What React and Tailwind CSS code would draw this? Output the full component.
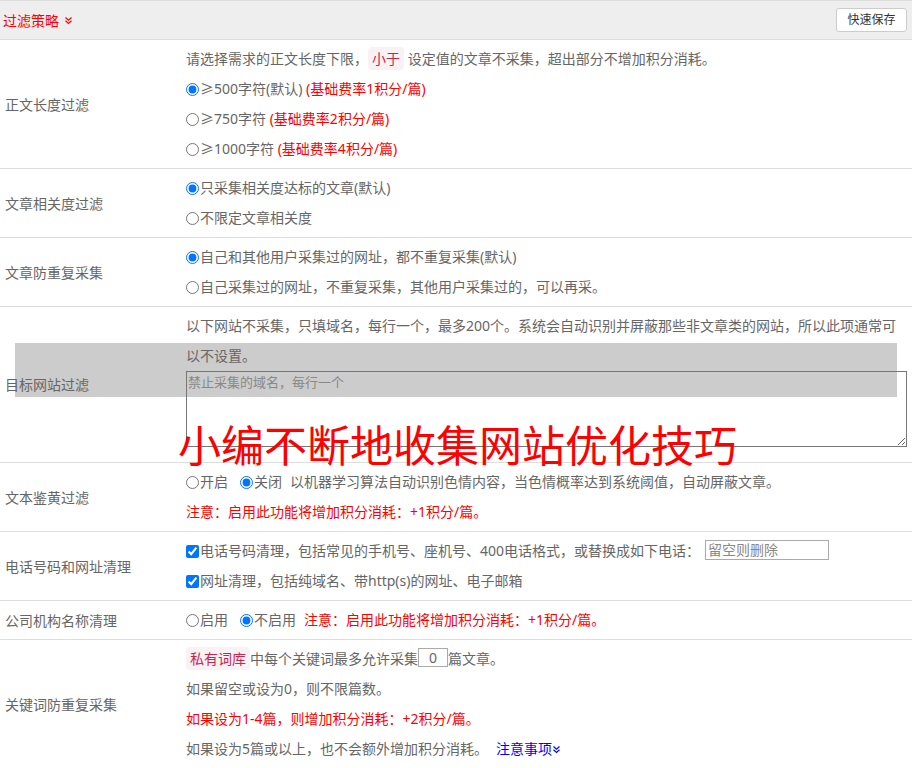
import React from "react";

const Chev = ({ color }) => (
  <svg width="9" height="9" viewBox="0 0 9 9" className="inline-block" fill="none" stroke={color} strokeWidth="1.2">
    <polyline points="1.5,1.5 4.5,4.2 7.5,1.5" />
    <polyline points="1.5,4.8 4.5,7.5 7.5,4.8" />
  </svg>
);

const Tag = ({ children }) => (
  <span className="bg-[#f9f2f4] text-[#c7254e] rounded-[4px] px-[4px] py-[2px] text-[14px]">{children}</span>
);

const Radio = ({ checked, name }) => (
  <input type="radio" name={name} defaultChecked={checked} className="m-0 mr-[1px] align-[-2px] w-[13px] h-[13px]" />
);

const Check = () => (
  <input type="checkbox" defaultChecked className="m-0 mr-[1px] align-[-2px] w-[13px] h-[13px]" />
);

const Row = ({ label, children, bodyClass = "" }) => (
  <div className="grid grid-cols-[186px_1fr] border-b border-[#ddd]">
    <div className="flex items-center pl-[5px]">{label}</div>
    <div className={"py-[4px] pr-[5px] leading-[30px] " + bodyClass}>{children}</div>
  </div>
);

export default function App() {
  return (
    <div
      className="relative w-[912px] h-[768px] overflow-hidden bg-white text-[14px] text-[#666]"
      style={{ fontFamily: '"Noto Sans", "Noto Sans CJK SC", sans-serif' }}
    >
      <div className="absolute left-[15px] top-[343px] w-[882px] h-[54px] bg-[#ccc]" />
      <div className="relative">
        <div className="h-[40px] bg-[#eee] border-t border-b border-[#ddd] flex items-center justify-between pl-[3px] pr-[5px]">
          <div className="text-[#f00] flex items-center gap-[5px]">
            <span>过滤策略</span>
            <Chev color="#f00" />
          </div>
          <button className="h-[24px] w-[71px] bg-white border border-[#ccc] rounded-[3px] text-[12px] text-[#333]">
            快速保存
          </button>
        </div>

        <Row label="正文长度过滤">
          <div>
            请选择需求的正文长度下限，<Tag>小于</Tag> 设定值的文章不采集，超出部分不增加积分消耗。
          </div>
          <div>
            <Radio name="len" checked />≥500字符(默认) <span className="text-[#f00]">(基础费率1积分/篇)</span>
          </div>
          <div>
            <Radio name="len" />≥750字符 <span className="text-[#f00]">(基础费率2积分/篇)</span>
          </div>
          <div>
            <Radio name="len" />≥1000字符 <span className="text-[#f00]">(基础费率4积分/篇)</span>
          </div>
        </Row>

        <Row label="文章相关度过滤">
          <div>
            <Radio name="rel" checked />只采集相关度达标的文章(默认)
          </div>
          <div>
            <Radio name="rel" />不限定文章相关度
          </div>
        </Row>

        <Row label="文章防重复采集">
          <div>
            <Radio name="dup" checked />自己和其他用户采集过的网址，都不重复采集(默认)
          </div>
          <div>
            <Radio name="dup" />自己采集过的网址，不重复采集，其他用户采集过的，可以再采。
          </div>
        </Row>

        <Row label="目标网站过滤">
          <div>
            以下网站不采集，只填域名，每行一个，最多200个。系统会自动识别并屏蔽那些非文章类的网站，所以此项通常可
            <br />
            以不设置。
          </div>
          <textarea
            placeholder="禁止采集的域名，每行一个"
            className="block w-[721px] h-[76px] mb-[11px] bg-transparent border border-[#777] text-[13px] leading-[18px] px-[1px] py-[1px] placeholder:text-[#888]"
          />
        </Row>

        <Row label="文本鉴黄过滤">
          <div>
            <Radio name="porn" />开启
            <span className="inline-block w-[12px]" />
            <Radio name="porn" checked />关闭
            <span className="inline-block w-[8px]" />
            以机器学习算法自动识别色情内容，当色情概率达到系统阈值，自动屏蔽文章。
          </div>
          <div className="text-[#f00]">注意：启用此功能将增加积分消耗：+1积分/篇。</div>
        </Row>

        <Row label="电话号码和网址清理">
          <div>
            <Check />电话号码清理，包括常见的手机号、座机号、400电话格式，或替换成如下电话：
            <input
              placeholder="留空则删除"
              className="ml-[5px] w-[124px] h-[20px] border border-[#aaa] px-[2px] text-[14px] leading-[18px] align-[1px] placeholder:text-[#888]"
            />
          </div>
          <div>
            <Check />网址清理，包括纯域名、带http(s)的网址、电子邮箱
          </div>
        </Row>

        <Row label="公司机构名称清理">
          <div>
            <Radio name="org" />启用
            <span className="inline-block w-[12px]" />
            <Radio name="org" checked />不启用
            <span className="inline-block w-[8px]" />
            <span className="text-[#f00]">注意：启用此功能将增加积分消耗：+1积分/篇。</span>
          </div>
        </Row>

        <Row label="关键词防重复采集">
          <div>
            <Tag>私有词库</Tag>中每个关键词最多允许采集
            <input
              defaultValue="0"
              className="w-[30px] h-[19px] border border-[#aaa] text-center text-[14px] text-[#666] leading-[17px] align-[1px]"
            />
            篇文章。
          </div>
          <div>如果留空或设为0，则不限篇数。</div>
          <div className="text-[#f00]">如果设为1-4篇，则增加积分消耗：+2积分/篇。</div>
          <div>
            如果设为5篇或以上，也不会额外增加积分消耗。
            <span className="ml-[8px] text-[#00f] inline-flex items-center">
              注意事项
              <Chev color="#00f" />
            </span>
          </div>
        </Row>
      </div>
      <div
        className="absolute left-[178px] top-[420px] text-[43px] leading-[46px] text-[#f00] whitespace-nowrap"
        style={{ fontFamily: '"Noto Sans CJK SC", sans-serif' }}
      >
        小编不断地收集网站优化技巧
      </div>
    </div>
  );
}
